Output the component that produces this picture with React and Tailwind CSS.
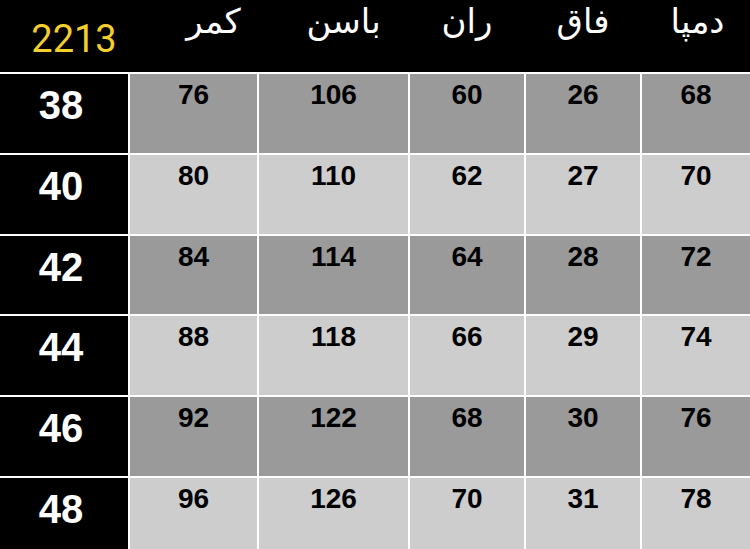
import React from "react";

const sizes = [
  { size: 38, values: [76, 106, 60, 26, 68] },
  { size: 40, values: [80, 110, 62, 27, 70] },
  { size: 42, values: [84, 114, 64, 28, 72] },
  { size: 44, values: [88, 118, 66, 29, 74] },
  { size: 46, values: [92, 122, 68, 30, 76] },
  { size: 48, values: [96, 126, 70, 31, 78] },
];

// header labels, with a small nudge where the picture is off-centre
const headers = [
  { label: "کمر", nudge: "pl-10" },
  { label: "باسن", nudge: "pl-5" },
  { label: "ران", nudge: "" },
  { label: "فاق", nudge: "" },
  { label: "دمپا", nudge: "pl-[3px]" },
];

const cols = "grid grid-cols-[128px_127px_149px_114px_114px_108px] gap-x-[2px]";

export default function App() {
  return (
    <div className="w-[750px] h-[549px] overflow-hidden bg-white flex flex-col gap-[2px]">
      {/* header */}
      <div className={`${cols} h-[72px] shrink-0 bg-black`}>
        <div className="flex justify-center pl-5 pt-[20px] text-[38px] leading-none text-[#f3cf2d] font-['Roboto',sans-serif]">
          2213
        </div>
        {headers.map((h) => (
          <div
            key={h.label}
            dir="rtl"
            className={`flex justify-center pt-[4px] text-[34px] leading-none text-white font-['DejaVu_Sans',sans-serif] ${h.nudge}`}
          >
            {h.label}
          </div>
        ))}
      </div>

      {/* body */}
      <div
        className={`${cols} grid-rows-[79px_79px_78px_79px_79px_1fr] gap-y-[2px] flex-1 bg-white font-['Liberation_Sans',Arial,sans-serif] font-bold`}
      >
        {sizes.map((row, i) => {
          const bg = i % 2 === 0 ? "bg-[#9a9a9a]" : "bg-[#cdcdcd]";
          return (
            <React.Fragment key={row.size}>
              <div className="bg-black flex justify-center pr-1.5 pt-[11px] text-[40px] leading-none text-white">
                {row.size}
              </div>
              {row.values.map((v, j) => (
                <div
                  key={j}
                  className={`${bg} flex justify-center pt-[7px] text-[28px] leading-none text-black`}
                >
                  {v}
                </div>
              ))}
            </React.Fragment>
          );
        })}
      </div>
    </div>
  );
}
